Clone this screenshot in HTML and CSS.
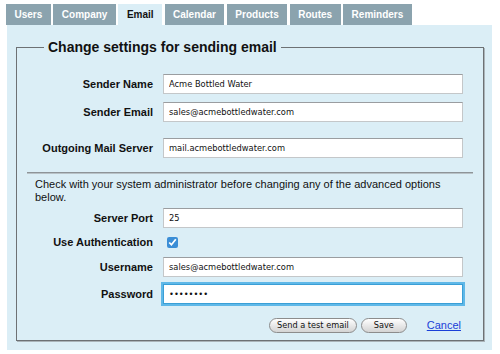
FILE: index.html
```html
<!DOCTYPE html>
<html lang="en">
<head>
  <meta charset="UTF-8">
  <title>Email settings</title>
  <link rel="stylesheet" href="styles.css">
</head>
<body>
  <div class="wrap">
    <div class="tabs">
      <span>Users</span><span>Company</span><span class="current">Email</span><span>Calendar</span><span>Products</span><span>Routes</span><span>Reminders</span>
    </div>
    <div class="panel">
      <fieldset class="settings">
        <legend>Change settings for sending email</legend>
        <div class="row">
          <label for="name">Sender Name</label>
          <input type="text" id="name" value="Acme Bottled Water">
        </div>
        <div class="row row-email">
          <label for="email">Sender Email</label>
          <input type="text" id="email" value="sales@acmebottledwater.com">
        </div>
        <div class="row row-server">
          <label for="server">Outgoing Mail Server</label>
          <input type="text" id="server" value="mail.acmebottledwater.com">
        </div>

        <div class="divider"></div>
        <p class="note">Check with your system administrator before changing any of the advanced options below.</p>

        <div class="row row-port">
          <label for="port">Server Port</label>
          <input type="text" id="port" value="25">
        </div>
        <div class="row row-auth">
          <label for="auth">Use Authentication</label>
          <input type="checkbox" id="auth" checked>
        </div>
        <div class="row row-user">
          <label for="user">Username</label>
          <input type="text" id="user" value="sales@acmebottledwater.com">
        </div>
        <div class="row row-pass">
          <label for="pass">Password</label>
          <input type="password" id="pass" class="focus" value="password">
        </div>

        <div class="actions">
          <button type="button" class="btn">Send a test email</button>
          <button type="button" class="btn btn-save">Save</button>
          <a href="#" class="cancel">Cancel</a>
        </div>
      </fieldset>
    </div>
  </div>
</body>
</html>
```

FILE: styles.css
```css
body {
  margin: 0;
  background-color: #fff;
  font-family: "Liberation Sans", Arial, sans-serif;
  color: #111;
}

.wrap {
  padding-top: 4px;
  margin-left: 6px;
}

.tabs {
  display: flex;
  gap: 2.5px;
  height: 21px;
}

.tabs span {
  display: block;
  padding: 0 8.5px;
  line-height: 21px;
  font-size: 10px;
  font-weight: bold;
  color: #fff;
  background-color: #8ba3ae;
}

.tabs span.current {
  background-color: #dbeef6;
  color: #111;
}

.panel {
  width: 485px;
  box-sizing: border-box;
  margin-left: 1px;
  padding: 14px 8px 9px 9px;
  background-color: #dbeef6;
}

.settings {
  margin: 0;
  padding: 2px 10px 7px 10px;
  border: 1px solid #6d7174;
  box-shadow: 1px 1px 0 #aab4b9;
}

.settings legend {
  margin-left: 17px;
  padding: 0 4px;
  font-size: 14px;
  font-weight: bold;
  line-height: 16px;
}

.row {
  display: flex;
  align-items: center;
  height: 20px;
  margin-top: 8px;
}

.row:first-of-type {
  margin-top: 17px;
}

.row label {
  width: 126px;
  margin-right: 10px;
  text-align: right;
  font-size: 11px;
  font-weight: bold;
}

.row input[type="text"],
.row input[type="password"] {
  width: 300px;
  height: 20px;
  box-sizing: border-box;
  margin: 0;
  padding: 0 5px;
  border: 1px solid #c4c7c9;
  border-top-color: #9a9da0;
  background-color: #fff;
  font-family: "DejaVu Sans", sans-serif;
  font-size: 8.3px;
  color: #111;
  outline: none;
}

.row input.focus {
  border-color: #3a9fd6;
  box-shadow: 0 0 0 2px #5fb8e8;
}

.row-server {
  margin-top: 16px;
}

.divider {
  margin-top: 14px;
  border-top: 1px solid #8e9498;
  border-bottom: 1px solid #b8c2c7;
}

.note {
  margin: 4px 0 0 8px;
  font-size: 11px;
  line-height: 13px;
}

.row-port {
  margin-top: 4px;
}

.row-auth {
  margin-top: 4px;
}

.row-auth input {
  width: 11px;
  height: 11px;
  margin: 0 0 0 4px;
  accent-color: #3b8ed6;
}

.row-user {
  margin-top: 5px;
}

.row-pass {
  margin-top: 7px;
}

.actions {
  display: flex;
  align-items: center;
  justify-content: flex-end;
  width: 300px;
  height: 16px;
  margin: 13px 0 0 136px;
}

.btn {
  height: 15px;
  margin: 0 0 0 4px;
  padding: 0 7px;
  border: 1px solid #8c8c8c;
  border-radius: 8px;
  background: linear-gradient(#ffffff, #e4e4e4 60%, #d4d4d4);
  font-family: "DejaVu Sans", sans-serif;
  font-size: 8.2px;
  line-height: 13px;
  color: #111;
}

.btn-save {
  width: 46px;
}

.cancel {
  margin: 0 2px 0 20px;
  font-size: 11px;
  color: #1a3fd8;
}
```
